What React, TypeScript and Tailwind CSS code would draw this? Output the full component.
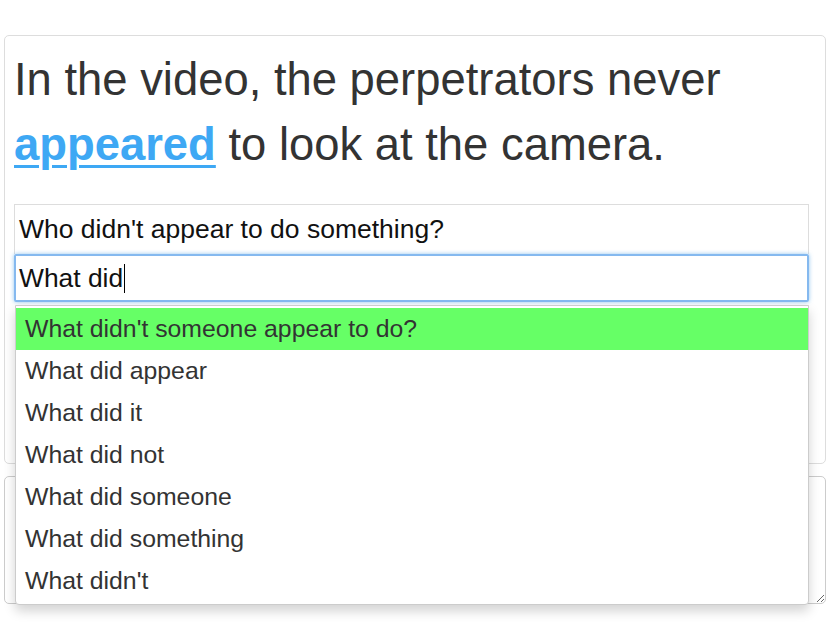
const suggestions = [
  "What didn't someone appear to do?",
  'What did appear',
  'What did it',
  'What did not',
  'What did someone',
  'What did something',
  "What didn't",
];

export default function App() {
  return (
    <div className="w-[830px] h-[642px] bg-white pt-[35px] px-[4px] font-['Liberation_Sans',Arial,sans-serif]">
      <div className="h-[429px] rounded-[5px] border border-[#dddddd] pl-[9px] pr-[16px] pt-[11px]">
        <p className="text-[45.4px] leading-[65px] text-[#333333]">
          In the video, the perpetrators never{' '}
          <a className="font-bold text-[#3ea8f4] underline decoration-[3px] underline-offset-[5px]">appeared</a> to look at
          the camera.
        </p>

        <div className="mt-[27px] h-[50px] border border-b-0 border-[#dddddd] px-[4px] text-[26.5px] leading-[48px] text-[#111111]">
          Who didn't appear to do something?
        </div>

        <div className="relative">
          <div className="h-[48px] rounded-[2px] border-2 border-[#85b9ef] px-[3px] text-[26.4px] leading-[44px] text-[#111111] shadow-[0_0_4px_rgba(102,175,233,0.7)]">
            What did
            <span className="ml-[1px] inline-block h-[29px] w-[1px] translate-y-[6px] bg-black" />
          </div>

          <div className="absolute left-[1px] right-0 top-[51px] z-10 rounded-b-[4px] border border-[#cccccc] bg-white py-[2px] shadow-[0_6px_12px_rgba(0,0,0,0.175)]">
            {suggestions.map((s, i) => (
              <div
                key={s}
                className={
                  i === 0
                    ? 'h-[42px] bg-[#66ff66] px-[9px] text-[24.8px] leading-[42px] text-[#333333]'
                    : 'h-[42px] px-[9px] text-[24.8px] leading-[42px] text-[#333333]'
                }
              >
                {s}
              </div>
            ))}
          </div>
        </div>
      </div>

      <textarea className="mt-[12px] block h-[128px] w-full rounded-[5px] border border-[#cccccc] bg-white" />
    </div>
  );
}
